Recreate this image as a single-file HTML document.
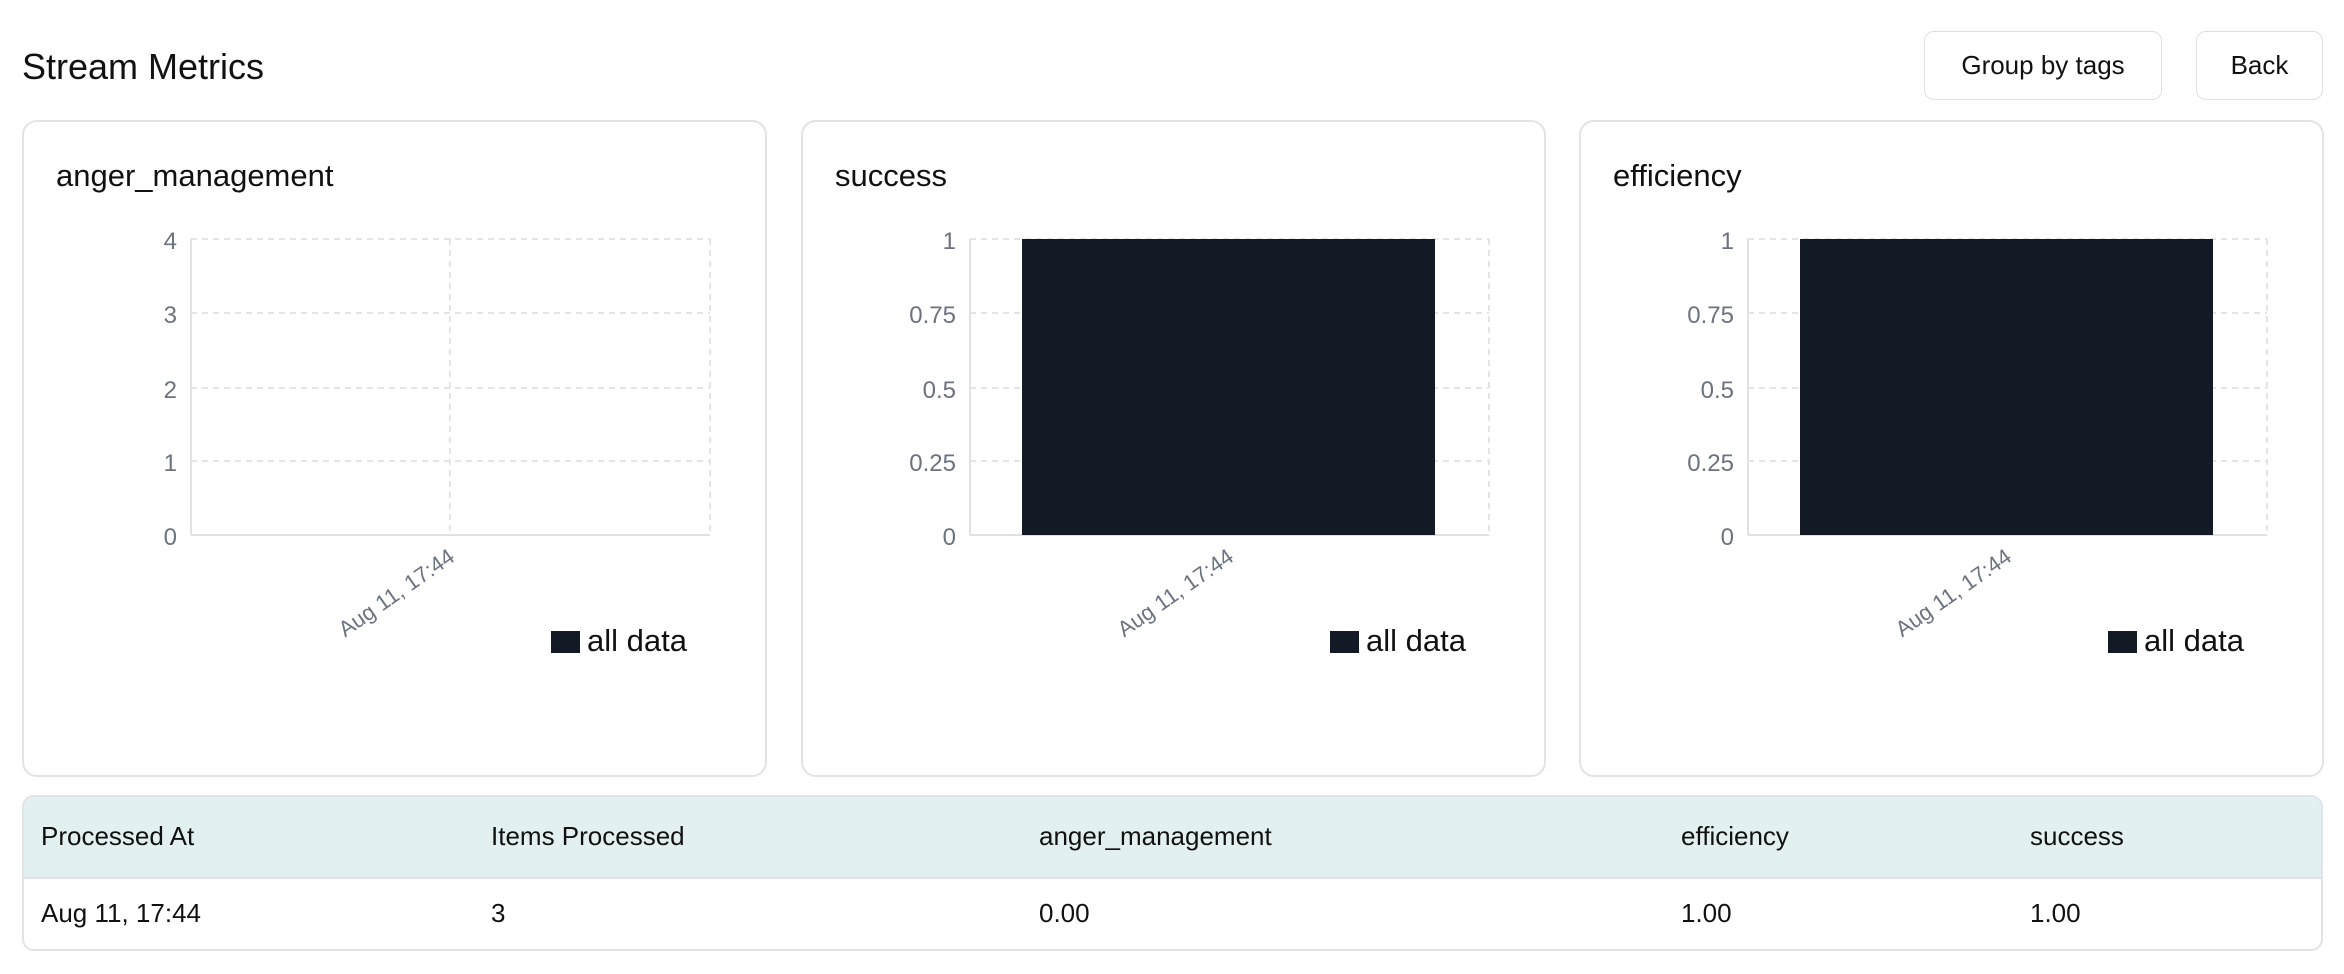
<!DOCTYPE html>
<html><head><meta charset="utf-8"><style>
body{margin:0;width:2344px;height:974px;background:#fff;font-family:"Liberation Sans",sans-serif;color:#111;position:relative;overflow:hidden}
.a{position:absolute}
.btn{position:absolute;top:31px;height:69px;border:1.5px solid #dedfe3;border-radius:10px;box-sizing:border-box;display:flex;align-items:center;justify-content:center;font-size:26px;color:#111;background:#fff}
.card{position:absolute;top:120px;width:745px;height:657px;border:2px solid #e2e3e6;border-radius:15px;box-sizing:border-box;background:#fff}
.card svg{position:absolute;left:-2px;top:-2px}
.tbl{position:absolute;left:22px;top:795px;width:2301px;height:156px;border:2px solid #e2e3e6;border-radius:12px;box-sizing:border-box;overflow:hidden}
.hd{position:absolute;left:0;top:0;width:100%;height:80px;background:#e3f0f1;border-bottom:2px solid #e2e3e6}
.c{position:absolute;font-size:26px}
</style></head><body>
<div class="a" style="left:22px;top:46px;font-size:36px">Stream Metrics</div>
<div class="btn" style="left:1924px;width:238px">Group by tags</div>
<div class="btn" style="left:2196px;width:127px">Back</div>

<div class="card" style="left:22px">
<svg width="745" height="657" font-family="Liberation Sans, sans-serif">
<text x="34" y="66" font-size="31" fill="#111">anger_management</text>
<g stroke="#e3e4e7" stroke-width="2" stroke-dasharray="6,5" fill="none">
<line x1="169" y1="119" x2="688" y2="119"/><line x1="169" y1="193" x2="688" y2="193"/><line x1="169" y1="268" x2="688" y2="268"/><line x1="169" y1="341" x2="688" y2="341"/>
<line x1="428" y1="119" x2="428" y2="415"/><line x1="688" y1="119" x2="688" y2="415"/></g>
<g stroke="#e0e1e4" stroke-width="2"><line x1="169" y1="119" x2="169" y2="415"/><line x1="169" y1="415" x2="688" y2="415"/></g>
<g font-size="24" fill="#6b7280" text-anchor="end"><text x="155" y="129">4</text><text x="155" y="203">3</text><text x="155" y="278">2</text><text x="155" y="351">1</text><text x="155" y="425">0</text></g>
<text x="434" y="440" font-size="22" fill="#6b7280" text-anchor="end" transform="rotate(-35 434 440)">Aug 11, 17:44</text>
<rect x="529" y="511" width="29" height="22" fill="#131a26"/><text x="565" y="531" font-size="31" fill="#111">all data</text>
</svg></div>

<div class="card" style="left:801px">
<svg width="745" height="657" font-family="Liberation Sans, sans-serif">
<text x="34" y="66" font-size="31" fill="#111">success</text>
<g stroke="#e3e4e7" stroke-width="2" stroke-dasharray="6,5" fill="none">
<line x1="169" y1="119" x2="688" y2="119"/><line x1="169" y1="193" x2="688" y2="193"/><line x1="169" y1="268" x2="688" y2="268"/><line x1="169" y1="341" x2="688" y2="341"/>
<line x1="428" y1="119" x2="428" y2="415"/><line x1="688" y1="119" x2="688" y2="415"/></g>
<g stroke="#e0e1e4" stroke-width="2"><line x1="169" y1="119" x2="169" y2="415"/><line x1="169" y1="415" x2="688" y2="415"/></g>
<rect x="221" y="119" width="413" height="296" fill="#131a26"/>
<g font-size="24" fill="#6b7280" text-anchor="end"><text x="155" y="129">1</text><text x="155" y="203">0.75</text><text x="155" y="278">0.5</text><text x="155" y="351">0.25</text><text x="155" y="425">0</text></g>
<text x="434" y="440" font-size="22" fill="#6b7280" text-anchor="end" transform="rotate(-35 434 440)">Aug 11, 17:44</text>
<rect x="529" y="511" width="29" height="22" fill="#131a26"/><text x="565" y="531" font-size="31" fill="#111">all data</text>
</svg></div>

<div class="card" style="left:1579px">
<svg width="745" height="657" font-family="Liberation Sans, sans-serif">
<text x="34" y="66" font-size="31" fill="#111">efficiency</text>
<g stroke="#e3e4e7" stroke-width="2" stroke-dasharray="6,5" fill="none">
<line x1="169" y1="119" x2="688" y2="119"/><line x1="169" y1="193" x2="688" y2="193"/><line x1="169" y1="268" x2="688" y2="268"/><line x1="169" y1="341" x2="688" y2="341"/>
<line x1="428" y1="119" x2="428" y2="415"/><line x1="688" y1="119" x2="688" y2="415"/></g>
<g stroke="#e0e1e4" stroke-width="2"><line x1="169" y1="119" x2="169" y2="415"/><line x1="169" y1="415" x2="688" y2="415"/></g>
<rect x="221" y="119" width="413" height="296" fill="#131a26"/>
<g font-size="24" fill="#6b7280" text-anchor="end"><text x="155" y="129">1</text><text x="155" y="203">0.75</text><text x="155" y="278">0.5</text><text x="155" y="351">0.25</text><text x="155" y="425">0</text></g>
<text x="434" y="440" font-size="22" fill="#6b7280" text-anchor="end" transform="rotate(-35 434 440)">Aug 11, 17:44</text>
<rect x="529" y="511" width="29" height="22" fill="#131a26"/><text x="565" y="531" font-size="31" fill="#111">all data</text>
</svg></div>

<div class="tbl"><div class="hd"></div>
<div class="c" style="left:17px;top:24px">Processed At</div>
<div class="c" style="left:467px;top:24px">Items Processed</div>
<div class="c" style="left:1015px;top:24px">anger_management</div>
<div class="c" style="left:1657px;top:24px">efficiency</div>
<div class="c" style="left:2006px;top:24px">success</div>
<div class="c" style="left:17px;top:101px">Aug 11, 17:44</div>
<div class="c" style="left:467px;top:101px">3</div>
<div class="c" style="left:1015px;top:101px">0.00</div>
<div class="c" style="left:1657px;top:101px">1.00</div>
<div class="c" style="left:2006px;top:101px">1.00</div>
</div>
</body></html>
